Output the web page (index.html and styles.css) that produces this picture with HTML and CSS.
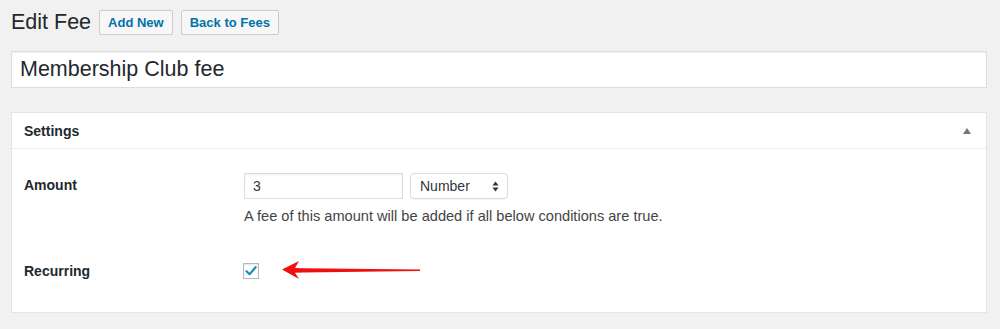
FILE: index.html
```html
<!DOCTYPE html>
<html lang="en">
<head>
    <meta charset="UTF-8">
    <title>Edit Fee</title>
    <link rel="stylesheet" href="styles.css">
</head>
<body>
    <div class="wrap">
        <!-- Page heading -->
        <div class="heading">
            <h1>Edit Fee</h1>
            <a href="#" class="page-action">Add New</a>
            <a href="#" class="page-action">Back to Fees</a>
        </div>

        <!-- Fee title -->
        <div class="title-field">Membership Club fee</div>

        <!-- Settings box -->
        <div class="postbox">
            <div class="postbox-header">
                <h2>Settings</h2>
                <span class="toggle-arrow"></span>
            </div>
            <div class="postbox-body">
                <div class="field-row">
                    <div class="field-label">Amount</div>
                    <div class="field-input">
                        <div class="controls">
                            <div class="text-input">3</div>
                            <div class="select">
                                <span>Number</span>
                                <svg class="select-arrows" width="7" height="11" viewBox="0 0 7 11">
                                    <path d="M3.5 0.5 L6.5 4.5 L0.5 4.5 Z" fill="#333"/>
                                    <path d="M3.5 10.5 L6.5 6.5 L0.5 6.5 Z" fill="#333"/>
                                </svg>
                            </div>
                        </div>
                        <p class="description">A fee of this amount will be added if all below conditions are true.</p>
                    </div>
                </div>
                <div class="field-row recurring">
                    <div class="field-label">Recurring</div>
                    <div class="field-input">
                        <div class="checkbox">
                            <svg width="14" height="14" viewBox="0 0 14 14">
                                <path d="M2.5 7.2 L5.6 10.3 L11.6 3.2" fill="none" stroke="#1e8cbe" stroke-width="2.2" stroke-linecap="round" stroke-linejoin="round"/>
                            </svg>
                        </div>
                        <!-- annotation arrow -->
                        <svg class="annotation" width="145" height="24" viewBox="0 0 145 24">
                            <polygon points="3,10.5 20,2 16,9 24,9.2 141,10.6 141,12 24,13.6 16,13.8 20,20" fill="#ee1010"/>
                        </svg>
                    </div>
                </div>
            </div>
        </div>
    </div>
</body>
</html>
```

FILE: styles.css
```css
* {
    margin: 0;
    padding: 0;
    box-sizing: border-box;
}

body {
    background-color: #f1f1f1;
    font-family: "Helvetica Neue", "Liberation Sans", Arial, sans-serif;
    color: #23282d;
    font-size: 13px;
}

.wrap {
    padding: 10px 13px 0 11px;
}

/* Heading */
.heading {
    display: flex;
    align-items: center;
    gap: 8px;
    height: 25px;
}

.heading h1 {
    font-size: 21.5px;
    font-weight: 400;
    line-height: 25px;
    color: #23282d;
}

.page-action {
    display: block;
    height: 25px;
    line-height: 23px;
    padding: 0 8px;
    border: 1px solid #ccc;
    border-radius: 2px;
    background-color: #f7f7f7;
    color: #0073aa;
    font-size: 13px;
    font-weight: 600;
    text-decoration: none;
}

/* Title input */
.title-field {
    margin-top: 16px;
    height: 37px;
    line-height: 35px;
    padding: 0 8px;
    background-color: #fff;
    border: 1px solid #ddd;
    box-shadow: inset 0 1px 2px rgba(0,0,0,0.07);
    font-size: 21.5px;
    color: #23282d;
}

/* Postbox */
.postbox {
    margin-top: 24px;
    background-color: #fff;
    border: 1px solid #e5e5e5;
    box-shadow: 0 1px 1px rgba(0,0,0,0.04);
}

.postbox-header {
    display: flex;
    align-items: center;
    justify-content: space-between;
    height: 36px;
    padding: 0 12px;
    border-bottom: 1px solid #eee;
}

.postbox-header h2 {
    font-size: 14px;
    font-weight: 600;
    color: #23282d;
}

.toggle-arrow {
    width: 0;
    height: 0;
    margin-right: 3px;
    margin-top: 1px;
    border-left: 4px solid transparent;
    border-right: 4px solid transparent;
    border-bottom: 6px solid #72777c;
}

.postbox-body {
    padding: 23px 12px 33px;
}

.field-row {
    display: flex;
}

.field-label {
    width: 220px;
    font-size: 14px;
    font-weight: 600;
    line-height: 26px;
    color: #23282d;
}

.field-input {
    flex: 1;
}

.controls {
    display: flex;
    align-items: center;
    gap: 7px;
}

.text-input {
    width: 159px;
    height: 26px;
    line-height: 24px;
    padding: 0 8px;
    border: 1px solid #ddd;
    box-shadow: inset 0 1px 2px rgba(0,0,0,0.07);
    font-size: 14px;
    color: #32373c;
}

.select {
    display: flex;
    align-items: center;
    justify-content: space-between;
    width: 98px;
    height: 26px;
    margin-top: 1px;
    padding: 0 8px 0 9px;
    border: 1px solid #ddd;
    border-radius: 4px;
    box-shadow: 0 1px 1px rgba(0,0,0,0.05);
    font-size: 14px;
    color: #32373c;
}

.description {
    margin-top: 8px;
    font-size: 14.6px;
    line-height: 18px;
    color: #444;
}

/* Recurring row */
.recurring {
    margin-top: 37px;
}

.recurring .field-label {
    line-height: 16px;
    padding-top: 1px;
}

.recurring .field-input {
    position: relative;
}

.checkbox {
    width: 16px;
    height: 16px;
    margin-top: 1px;
    margin-left: -1px;
    border: 1px solid #b4b9be;
    box-shadow: inset 0 1px 2px rgba(0,0,0,0.1);
    display: flex;
    align-items: center;
    justify-content: center;
}

.annotation {
    position: absolute;
    left: 35px;
    top: -3px;
}
```
